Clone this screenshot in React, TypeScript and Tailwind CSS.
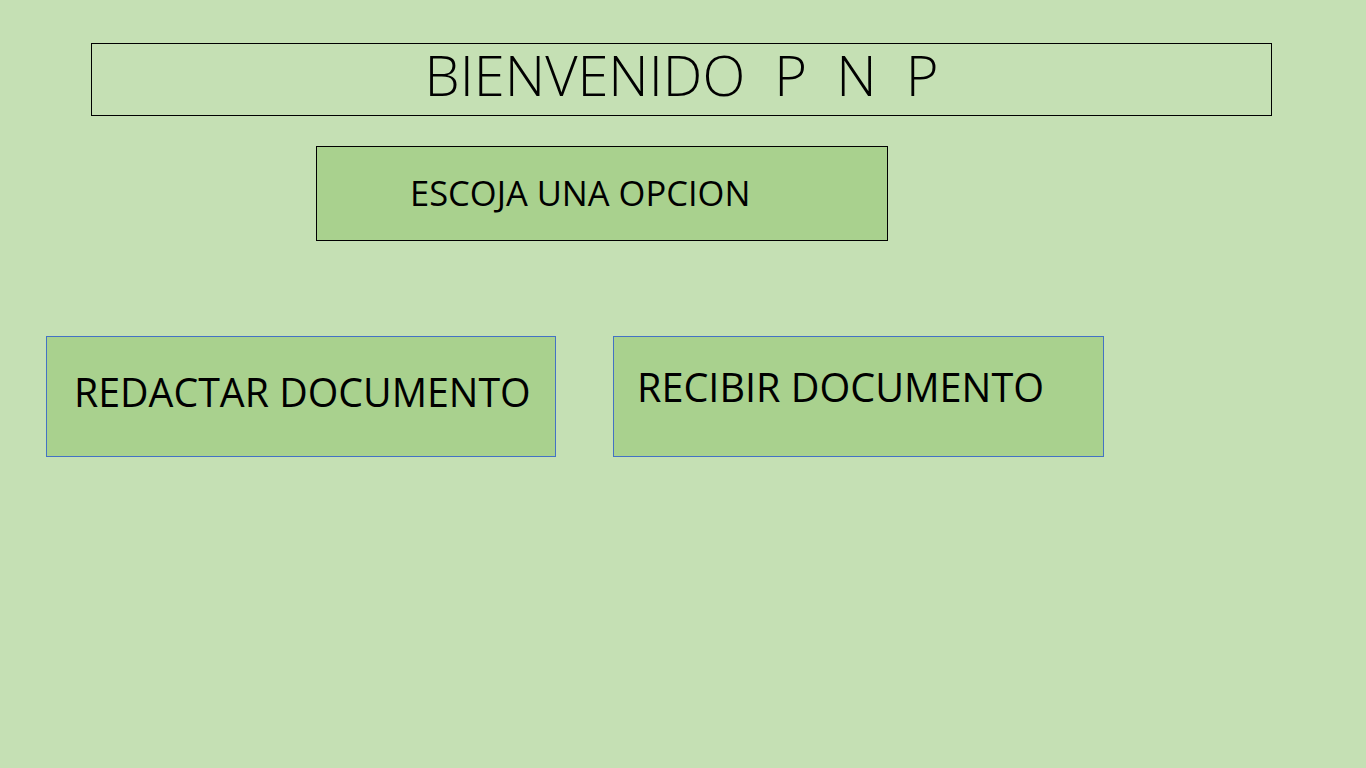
const font = { fontFamily: '"Open Sans", "Noto Sans", sans-serif' }

const App = () => {
  return (
    <div className="min-h-[768px] w-[1366px] bg-[#c5e0b4] text-black" style={font}>
      <div className="pt-[43px] pl-[91px]">
        <div className="flex h-[73px] w-[1181px] justify-center border border-black pt-[2px]">
          <h1 className="whitespace-pre text-[56px] leading-none font-light">BIENVENIDO  P  N  P</h1>
        </div>
      </div>
      <div className="pt-[30px] pl-[316px]">
        <div className="flex h-[95px] w-[572px] items-center border border-black bg-[#a9d18e] pl-[93px]">
          <p className="text-[34.5px] leading-none">ESCOJA UNA OPCION</p>
        </div>
      </div>
      <div className="flex gap-[57px] pt-[95px] pl-[46px]">
        <button className="flex h-[121px] w-[510px] items-start border border-[#4472c4] bg-[#a9d18e] pt-[36px] pl-[27px] text-left">
          <span className="text-[39.3px] leading-none">REDACTAR DOCUMENTO</span>
        </button>
        <button className="flex h-[121px] w-[491px] items-start border border-[#4472c4] bg-[#a9d18e] pt-[31px] pl-[23px] text-left">
          <span className="text-[39.6px] leading-none">RECIBIR DOCUMENTO</span>
        </button>
      </div>
    </div>
  )
}

export default App
